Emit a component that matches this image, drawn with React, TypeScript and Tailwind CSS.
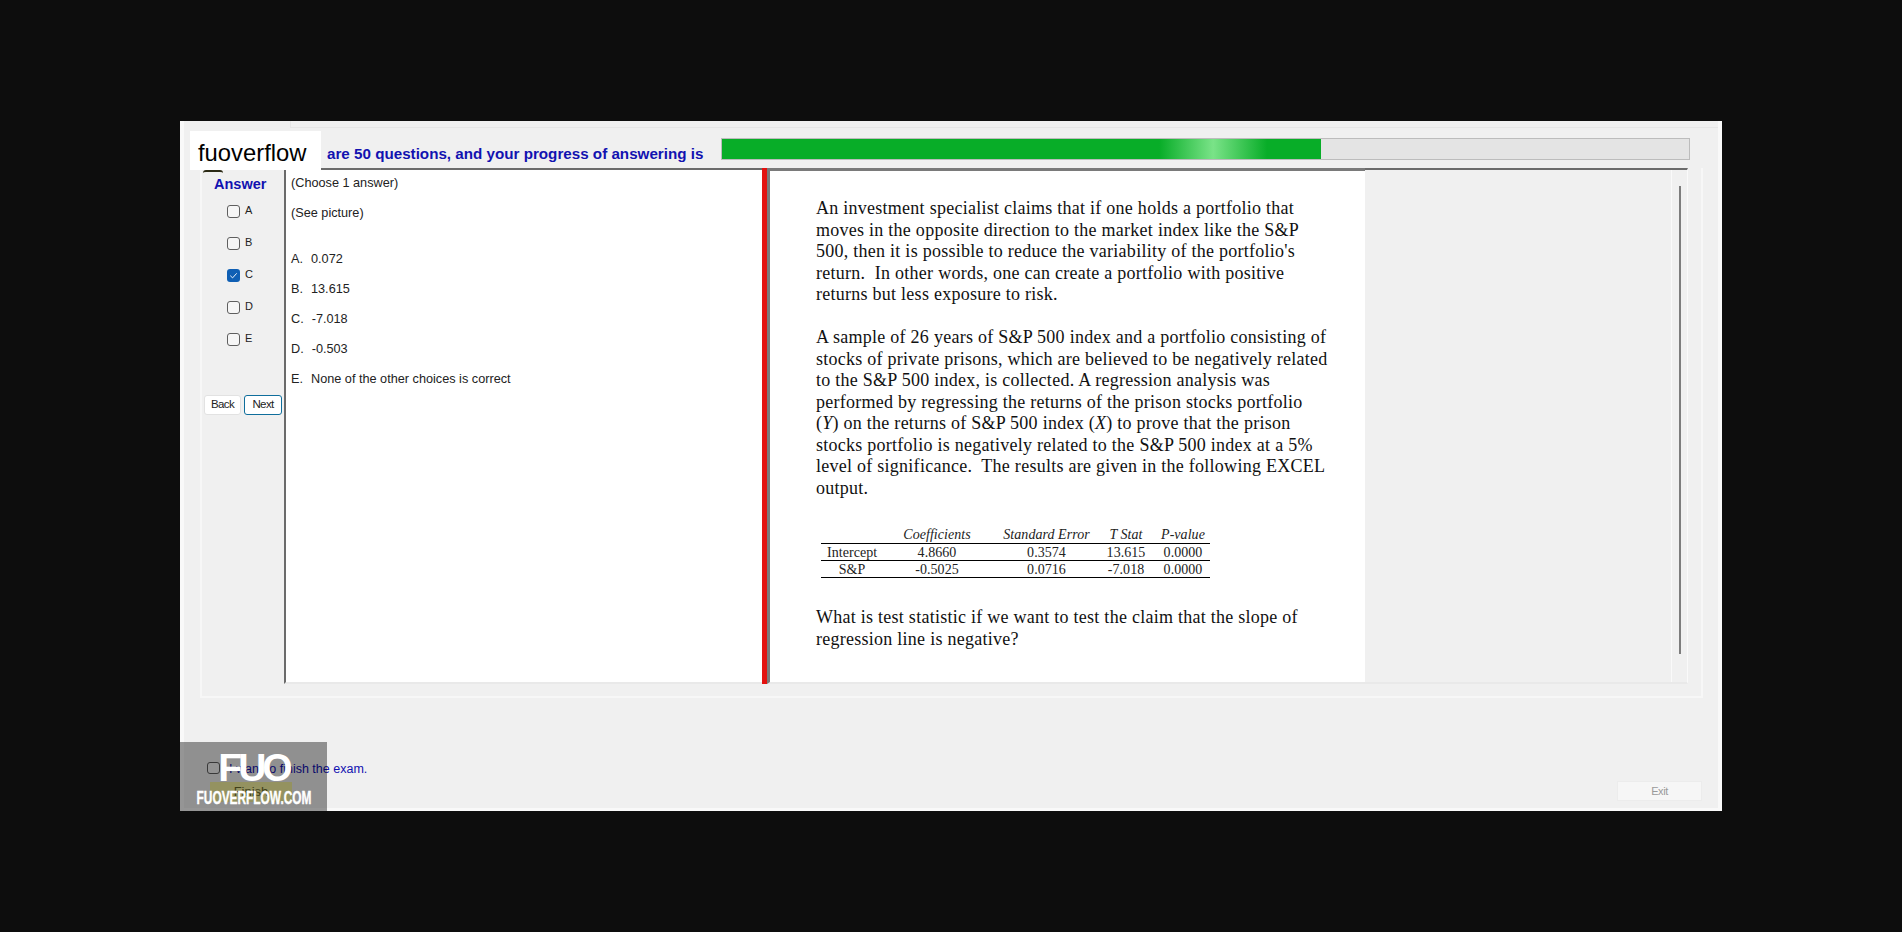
const answers = [
  { key: "A", checked: false },
  { key: "B", checked: false },
  { key: "C", checked: true },
  { key: "D", checked: false },
  { key: "E", checked: false },
];

const choices = ["0.072", "13.615", "-7.018", "-0.503", "None of the other choices is correct"];

const firstParagraph = [
  "An investment specialist claims that if one holds a portfolio that",
  "moves in the opposite direction to the market index like the S&P",
  "500, then it is possible to reduce the variability of the portfolio's",
  "return.  In other words, one can create a portfolio with positive",
  "returns but less exposure to risk.",
];

const rows = [
  ["Intercept", "4.8660", "0.3574", "13.615", "0.0000"],
  ["S&P", "-0.5025", "0.0716", "-7.018", "0.0000"],
];

function AnswerBox({ checked }: { checked: boolean }) {
  if (checked) {
    return (
      <span className="flex h-[13px] w-[13px] items-center justify-center rounded-[3px] bg-[#0f5fb4]">
        <svg viewBox="0 0 12 12" className="h-[11px] w-[11px]" fill="none" stroke="#fff" strokeWidth="1">
          <path d="M2.5 6.2 5 8.6l4.5-5" />
        </svg>
      </span>
    );
  }
  return <span className="h-[13px] w-[13px] rounded-[3px] border border-[#5f5f5f] bg-[#f6f6f6]" />;
}

function Row({ cells }: { cells: string[] }) {
  return (
    <div className="grid h-[17px] grid-cols-[56px_120px_99px_60px_54px] items-start border-b border-black text-center leading-[17px]">
      {cells.map((c, i) => (
        <span key={i} className={i === 0 ? "pl-[6px]" : ""}>
          {c}
        </span>
      ))}
    </div>
  );
}

export default function App() {
  return (
    <div className="h-[932px] w-[1902px] overflow-hidden bg-[#0d0d0d] pl-[180px] pt-[121px] font-['Liberation_Sans',Arial,sans-serif]">
      <div className="relative flex h-[690px] w-[1542px] flex-col border-x-4 border-b-[3px] border-[#f9f9f9] bg-[#f0f0f0]">
        {/* tab strip */}
        <div className="ml-[106px] h-[7px] border-b border-l border-[#e6e6e6]" />

        {/* top row */}
        <div className="flex h-[40px] items-start pl-[143px] pt-[10px]">
          <span className="mt-[5px] w-[394px] whitespace-nowrap text-[15.2px] font-bold leading-[22px] text-[#1212b0]">
            are 50 questions, and your progress of answering is
          </span>
          <div className="h-[22px] w-[969px] border border-[#bcbcbc] bg-[#e4e4e4]">
            <div className="h-full w-[599px] bg-[linear-gradient(90deg,#08ad28_0%,#08ad28_73%,#7ae388_82%,#08ad28_91%,#08ad28_100%)]" />
          </div>
        </div>

        {/* main frame */}
        <div className="ml-[16px] flex h-[530px] w-[1503px] border-b-2 border-l-2 border-r-2 border-[#f7f7f7]">
          <div className="flex w-[82px] shrink-0 flex-col">
            <div className="h-[31px] pl-[12px] pt-[7px] text-[14.5px] font-bold leading-[18px] text-[#1212b0]">Answer</div>
            <div className="flex flex-col gap-[19px] pl-[25px] pt-[6px]">
              {answers.map((a) => (
                <label key={a.key} className="flex h-[13px] items-center gap-[5px] text-[11px] text-[#222]">
                  <AnswerBox checked={a.checked} />
                  <span className="-mt-[2px]">{a.key}</span>
                </label>
              ))}
            </div>
            <div className="flex gap-[3px] pl-[2px] pt-[49px] text-[11.5px] tracking-[-0.6px] text-[#222]">
              <button className="h-[20px] w-[37px] rounded-[3px] border border-[#e2e2e2] bg-white">Back</button>
              <button className="h-[20px] w-[38px] rounded-[3px] border border-[#0f6e9c] bg-white">Next</button>
            </div>
          </div>

          <div className="flex h-[516px] w-[478px] shrink-0 flex-col border-b-2 border-l-2 border-t-2 border-[#6b6b6b] border-b-[#e9e9e9] bg-white pl-[5px] text-[12.7px] text-[#222]">
            <p className="pt-[6px] leading-[14px]">(Choose 1 answer)</p>
            <p className="pt-[16px] leading-[14px]">(See picture)</p>
            <div className="flex flex-col gap-[16px] pt-[32px]">
              {choices.map((c, i) => (
                <p key={c} className="flex gap-[8px] leading-[14px]">
                  <span>{"ABCDE"[i]}.</span>
                  <span>{c}</span>
                </p>
              ))}
            </div>
          </div>

          <div className="h-[516px] w-[5px] shrink-0 bg-[#e3120f]" />

          <div className="h-[516px] w-[598px] shrink-0 border-b-2 border-l-[3px] border-t-[3px] border-[#7a7a7a] border-b-[#e9e9e9] bg-white pl-[46px] pt-[27px] font-['Liberation_Serif',serif] text-[18px] leading-[21.5px] tracking-[0.26px] text-[#111]">
            {firstParagraph.map((l) => (
              <p key={l} className="whitespace-pre">
                {l}
              </p>
            ))}
            <div className="h-[21.5px]" />
            <p className="whitespace-pre">A sample of 26 years of S&amp;P 500 index and a portfolio consisting of</p>
            <p className="whitespace-pre">stocks of private prisons, which are believed to be negatively related</p>
            <p className="whitespace-pre">to the S&amp;P 500 index, is collected. A regression analysis was</p>
            <p className="whitespace-pre">performed by regressing the returns of the prison stocks portfolio</p>
            <p className="whitespace-pre">
              (<i>Y</i>) on the returns of S&amp;P 500 index (<i>X</i>) to prove that the prison
            </p>
            <p className="whitespace-pre">stocks portfolio is negatively related to the S&amp;P 500 index at a 5%</p>
            <p className="whitespace-pre">level of significance.  The results are given in the following EXCEL</p>
            <p className="whitespace-pre">output.</p>

            <div className="ml-[5px] mt-[27px] w-[389px] text-[14px] tracking-[0.05px] text-[#222]">
              <div className="grid h-[18px] grid-cols-[56px_120px_99px_60px_54px] items-start border-b border-black pt-[1px] text-center italic leading-[16px]">
                <span />
                <span>Coefficients</span>
                <span>Standard Error</span>
                <span>T Stat</span>
                <span>P-value</span>
              </div>
              {rows.map((r) => (
                <Row key={r[0]} cells={r} />
              ))}
            </div>

            <div className="mt-[29px]">
              <p className="whitespace-pre">What is test statistic if we want to test the claim that the slope of</p>
              <p className="whitespace-pre">regression line is negative?</p>
            </div>
          </div>

          {/* empty area with scrollbar */}
          <div className="flex h-[516px] w-[323px] border-b-2 border-r border-t-2 border-[#6b6b6b] border-b-[#e9e9e9] border-r-[#fafafa]">
            <div className="w-[307px] border-r border-[#fafafa]" />
            <div className="ml-[7px] mt-[16px] h-[468px] w-[2px] bg-[#7d7d7d]" />
          </div>
        </div>

        {/* bottom row */}
        <div className="flex flex-1 items-start justify-between pl-[23px] pr-[16px] pt-[62px]">
          <div className="flex flex-col gap-[6px]">
            <label className="flex h-[16px] items-center gap-[9px] text-[12.5px] text-[#1212b0]">
              <span className="h-[12px] w-[13px] rounded-[3px] border border-[#5f5f5f] bg-[#f6f6f6]" />
              <span className="mt-[2px]">I want to finish the exam.</span>
            </label>
            <button className="ml-[3px] h-[20px] w-[82px] bg-[#f7f3a0] text-[13px] text-[#6a6a2a]">Finish</button>
          </div>
          <button className="mt-[21px] h-[20px] w-[85px] border border-[#ececec] bg-[#f6f6f6] text-[11px] tracking-[-0.4px] text-[#9a9a9a]">
            Exit
          </button>
        </div>

        {/* watermark overlays */}
        <div className="absolute left-[6px] top-[10px] flex h-[39px] w-[131px] items-center bg-white pl-[8px] pt-[4px] text-[23.8px] leading-none text-black">
          fuoverflow
        </div>
        <div className="absolute left-[19px] top-[49px] h-[3px] w-[20px] rounded-t-full border-t-2 border-[#2b2a15]" />
        <div className="absolute bottom-[-3px] left-[-4px] flex h-[69px] w-[147px] flex-col items-center bg-black/40 font-bold text-white">
          <span className="mt-[7px] text-[39px] leading-[38px] tracking-[-4px]">FUO</span>
          <span className="mt-[3px] scale-x-[0.66] whitespace-nowrap text-[18px] leading-[17px] [-webkit-text-stroke:0.4px_white]">
            FUOVERFLOW.COM
          </span>
        </div>
      </div>
    </div>
  );
}
